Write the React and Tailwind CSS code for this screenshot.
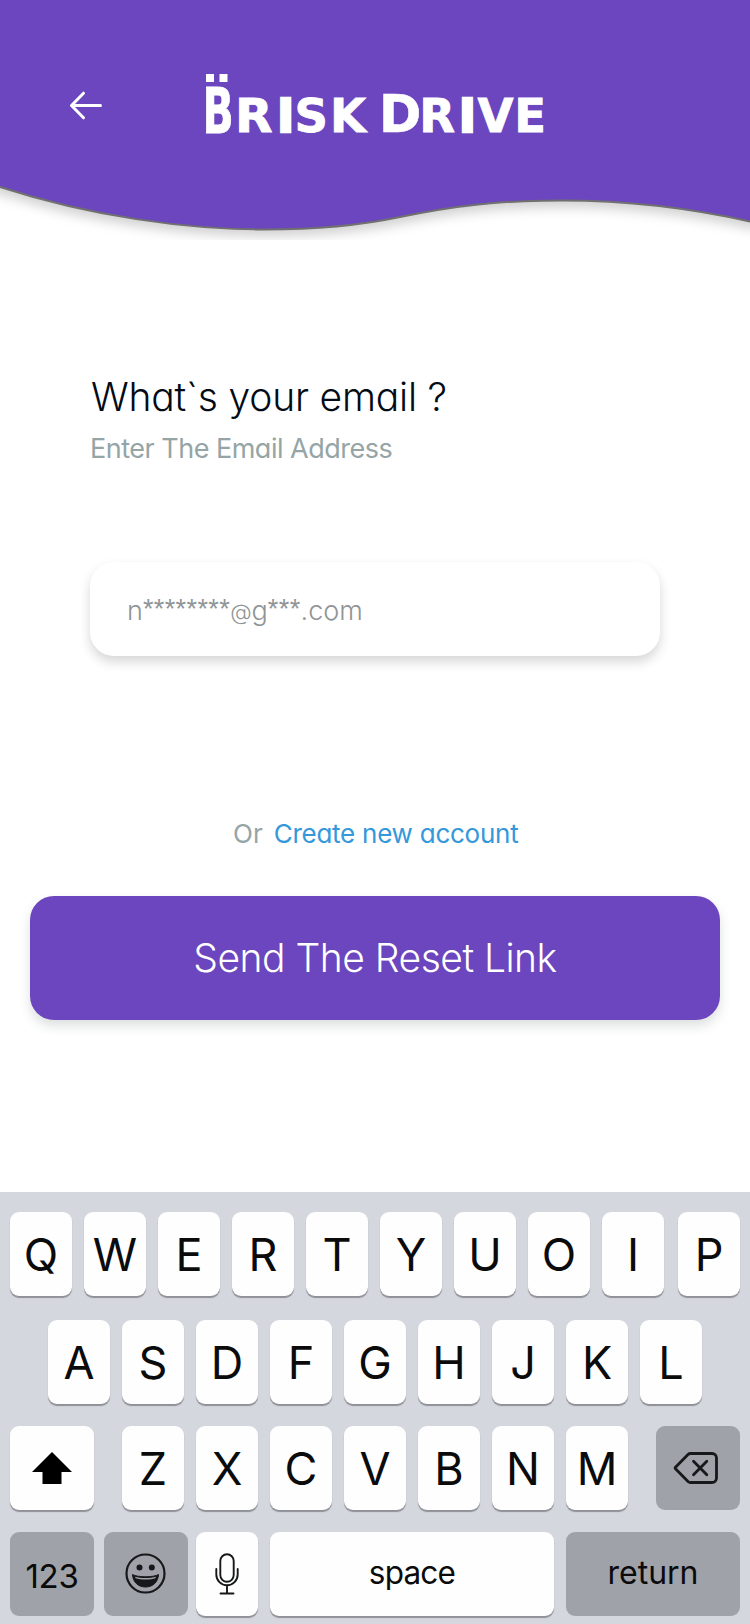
import React from "react";

const WAVE =
  "M-8 184.5 L0 187 C90 216 185 229.5 265 229.5 C315 229.5 355 226.5 400 217 C455 205.5 500 200.5 562 200.5 C625 200.5 690 208 750 221.5 L758 223 V-8 H-8 Z";

function Logo() {
  return (
    <svg
      className="ml-[66px] mt-[50px] h-[110px] w-[410px] shrink-0 overflow-visible fill-white stroke-white font-['DejaVu_Sans',sans-serif] font-bold"
      viewBox="170 50 410 110"
      aria-label="Brisk Drive"
    >
      <rect x="206" y="74" width="8" height="8" stroke="none" />
      <rect x="219.5" y="74" width="8" height="8" stroke="none" />
      <text transform="translate(202.6 133) scale(.65 1)" fontSize="63" strokeWidth="0.8">B</text>
      <g fontSize="46.5" strokeWidth="0.8">
        <text transform="translate(235 132) scale(1.05 1)">R</text>
        <text y="132" x="276.9" strokeWidth="2.4">I</text>
        <text y="132" x="294.5">S</text>
        <text y="132" x="330">K</text>
        <text y="132" x="379" fontSize="51" strokeWidth="0.6">D</text>
        <text y="132" x="419.2">R</text>
        <text y="132" x="458.8" strokeWidth="2.4">I</text>
        <text y="132" x="477.5">V</text>
        <text y="132" x="514.2">E</text>
      </g>
    </svg>
  );
}

function Header() {
  return (
    <header className="relative h-[240px] w-full overflow-hidden">
      <svg className="absolute inset-0 h-[240px] w-[750px]" viewBox="0 0 750 240">
        <path
          d={WAVE}
          fill="#6b46be"
          stroke="#707070"
          strokeWidth="2"
          className="[filter:drop-shadow(0_6px_6px_rgba(0,0,0,0.18))]"
        />
      </svg>
      <div className="relative flex items-start">
        <svg
          className="ml-[68px] mt-[90px] h-[32px] w-[36px] shrink-0 stroke-white"
          viewBox="0 0 36 32"
          fill="none"
          strokeWidth="3"
          strokeLinecap="round"
          strokeLinejoin="round"
        >
          <path d="M32.500 15.500H3.500M15.500 3.200 3.500 15.500l12 12.300" />
        </svg>
        <Logo />
      </div>
    </header>
  );
}

function Key({ children, className = "w-[62px]", dark = false }) {
  return (
    <div
      className={`flex h-[84px] shrink-0 items-center justify-center rounded-[9px] text-[45px] leading-none text-[#0b0b0b] ${
        dark ? "bg-[#9fa2a9]" : "bg-[#fefefe] shadow-[0_2px_1px_#8f9197]"
      } ${className}`}
    >
      {children}
    </div>
  );
}

function Keyboard() {
  return (
    <section className="h-[432px] w-full bg-[#d4d7dd] pt-5 font-[Inter,sans-serif]">
      <div className="flex gap-3 pl-2.5">
        {"QWERTYUOI".split("").map((k) => (
          <Key key={k}>{k}</Key>
        ))}
        <Key className="ml-[2px] w-[62px]">P</Key>
      </div>
      <div className="mt-6 flex gap-3 pl-12">
        {"ASDFGHJKL".split("").map((k) => (
          <Key key={k}>{k}</Key>
        ))}
      </div>
      <div className="mt-[22px] flex gap-3 pl-2.5">
        <Key className="mr-4 w-[84px]">
          <svg className="h-[32px] w-[40px]" viewBox="0 0 40 32">
            <path d="M20 0 40 20H29.5V32H10.5V20H0Z" fill="#000" />
          </svg>
        </Key>
        {"ZXCVBNM".split("").map((k) => (
          <Key key={k}>{k}</Key>
        ))}
        <Key dark className="ml-4 w-[84px]">
          <svg
            className="ml-[-5px] h-[34px] w-[46px]"
            viewBox="0 0 46 34"
            fill="none"
            stroke="#17181a"
            strokeWidth="2.8"
            strokeLinejoin="round"
            strokeLinecap="round"
          >
            <path d="M17.5 2.5H39a4.5 4.5 0 0 1 4.5 4.5V27a4.5 4.5 0 0 1-4.500 4.500H17.500Q16 31.500 15 30.500L2.500 17.800Q1.800 17 2.500 16.200L15 3.500Q16 2.500 17.500 2.500Z" />
            <path d="M20.500 10.300 33.800 23.700M33.800 10.300 20.500 23.700" />
          </svg>
        </Key>
      </div>
      <div className="mt-[22px] flex pl-2.5">
        <Key dark className="w-[84px] pt-1 text-[33px]! tracking-[-0.3px]">123</Key>
        <Key dark className="ml-2.5 w-[84px]">
          <svg className="h-[42px] w-[42px]" viewBox="0 0 42 42" fill="none">
            <circle cx="20.500" cy="20.500" r="19" stroke="#17181a" strokeWidth="2.200" />
            <circle cx="14.500" cy="14.500" r="3" fill="#17181a" />
            <circle cx="26.800" cy="14.500" r="3" fill="#17181a" />
            <path
              d="M7.500 21.500C12 24.500 29 24.500 33.500 21.500C33 29.500 27.500 34 20.500 34S8 29.500 7.500 21.500Z"
              fill="#17181a"
              stroke="#17181a"
              strokeWidth="1"
              strokeLinejoin="round"
            />
            <path d="M10 23.700C15 25.500 26 25.500 31 23.700L30.300 25.200C26 27 15 27 10.700 25.200Z" fill="#9fa2a9" />
          </svg>
        </Key>
        <Key className="ml-2 w-[62px]">
          <svg
            className="h-[42px] w-[26px]"
            viewBox="0 0 26 42"
            fill="none"
            stroke="#17181a"
            strokeWidth="1.900"
            strokeLinecap="round"
          >
            <rect x="6.300" y="1.300" width="13.400" height="27.500" rx="6.700" />
            <path d="M2.300 16v5.500a10.700 10.700 0 0 0 21.400 0V16M13 32.500v8M6.500 40.500h13" />
          </svg>
        </Key>
        <Key className="ml-3 w-[284px] pb-[3px] text-[31.5px]! tracking-[-0.8px]">space</Key>
        <Key dark className="ml-3 w-[174px] pb-[3px] text-[32px]!">return</Key>
      </div>
    </section>
  );
}

function Stars({ children }) {
  return (
    <span className="relative -top-[2px] font-['Liberation_Sans',sans-serif] text-[27px] tracking-[0.4px]">
      {children}
    </span>
  );
}

export default function App() {
  return (
    <div className="flex h-[1624px] w-[750px] flex-col overflow-hidden bg-white font-[Inter,sans-serif]">
      <Header />
      <main className="flex h-[952px] shrink-0 flex-col [font-feature-settings:'cv11'_1]">
        <h1 className="ml-[91px] mt-[132px] h-[50px] whitespace-nowrap text-[39px] leading-[50px] font-light tracking-[-0.2px] text-[#040b14]">
          What`s your email ?
        </h1>
        <p className="ml-[90px] mt-[9px] h-[36px] whitespace-nowrap text-[27px] leading-[36px] tracking-[-0.5px] text-[#95a5a6]">
          Enter The Email Address
        </p>
        <div className="ml-[90px] mt-[95px] flex h-[94px] w-[570px] items-center rounded-[24px] bg-white pl-[37px] shadow-[0_6px_12px_rgba(0,0,0,0.16)]">
          <span className="whitespace-nowrap pt-[4px] text-[27px] leading-[36px] font-light text-[#8f9496]">
            n<Stars>********</Stars>
            <span className="text-[22px]">@</span>g<Stars>***</Stars>.com
          </span>
        </div>
        <p className="ml-[233px] mt-[160px] flex h-[36px] items-center gap-[11px] whitespace-nowrap text-[26px] leading-[36px]">
          <span className="text-[#95a5a6]">Or</span>
          <a className="tracking-[-0.25px] text-[#3498db]">Create new account</a>
        </p>
        <button className="ml-[30px] mt-[44px] h-[124px] w-[690px] rounded-[24px] bg-[#6b46be] text-[39px] font-light tracking-[-0.5px] text-white shadow-[0_6px_12px_rgba(44,62,60,0.16)]">
          Send The Reset Link
        </button>
      </main>
      <Keyboard />
    </div>
  );
}
